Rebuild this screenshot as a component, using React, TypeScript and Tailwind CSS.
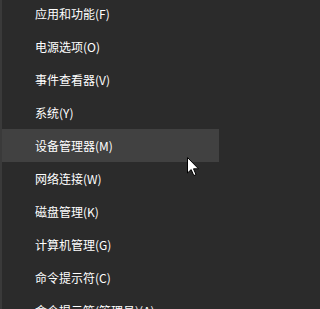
const items = [
  '应用和功能(F)',
  '电源选项(O)',
  '事件查看器(V)',
  '系统(Y)',
  '设备管理器(M)',
  '网络连接(W)',
  '磁盘管理(K)',
  '计算机管理(G)',
  '命令提示符(C)',
  '命令提示符(管理员)(A)',
];

const Cursor = () => (
  <svg
    className="absolute left-[187px] top-[157px]"
    width="13"
    height="20"
    viewBox="0 0 13 20"
  >
    <path
      d="M0.5 0.5 L0.5 16 L4.2 12.6 L6.8 18.6 L9 17.6 L6.5 11.8 L11.5 11.8 Z"
      fill="#ffffff"
      stroke="#000000"
      strokeWidth="1"
      strokeLinejoin="miter"
    />
  </svg>
);

export default function App() {
  const hovered = 4;
  return (
    <div className="min-h-screen w-full bg-[#2b2b2b]">
      <div className="relative w-[219px] h-[309px] overflow-hidden bg-[#2b2b2b] flex">
        {/* left edge of the menu */}
        <div className="w-[2px] shrink-0 bg-[#3a3a3a]" />
        <ul className="flex-1 flex flex-col -mt-[3px]">
          {items.map((label, i) => (
            <li
              key={label}
              className={
                'h-[33px] shrink-0 flex items-center pl-[33px] text-[12px] leading-none text-white ' +
                (i === hovered ? 'bg-[#414141]' : '')
              }
              style={{ fontFamily: '"Noto Sans CJK SC", "Noto Sans", sans-serif' }}
            >
              {label}
            </li>
          ))}
        </ul>
        <Cursor />
      </div>
    </div>
  );
}
